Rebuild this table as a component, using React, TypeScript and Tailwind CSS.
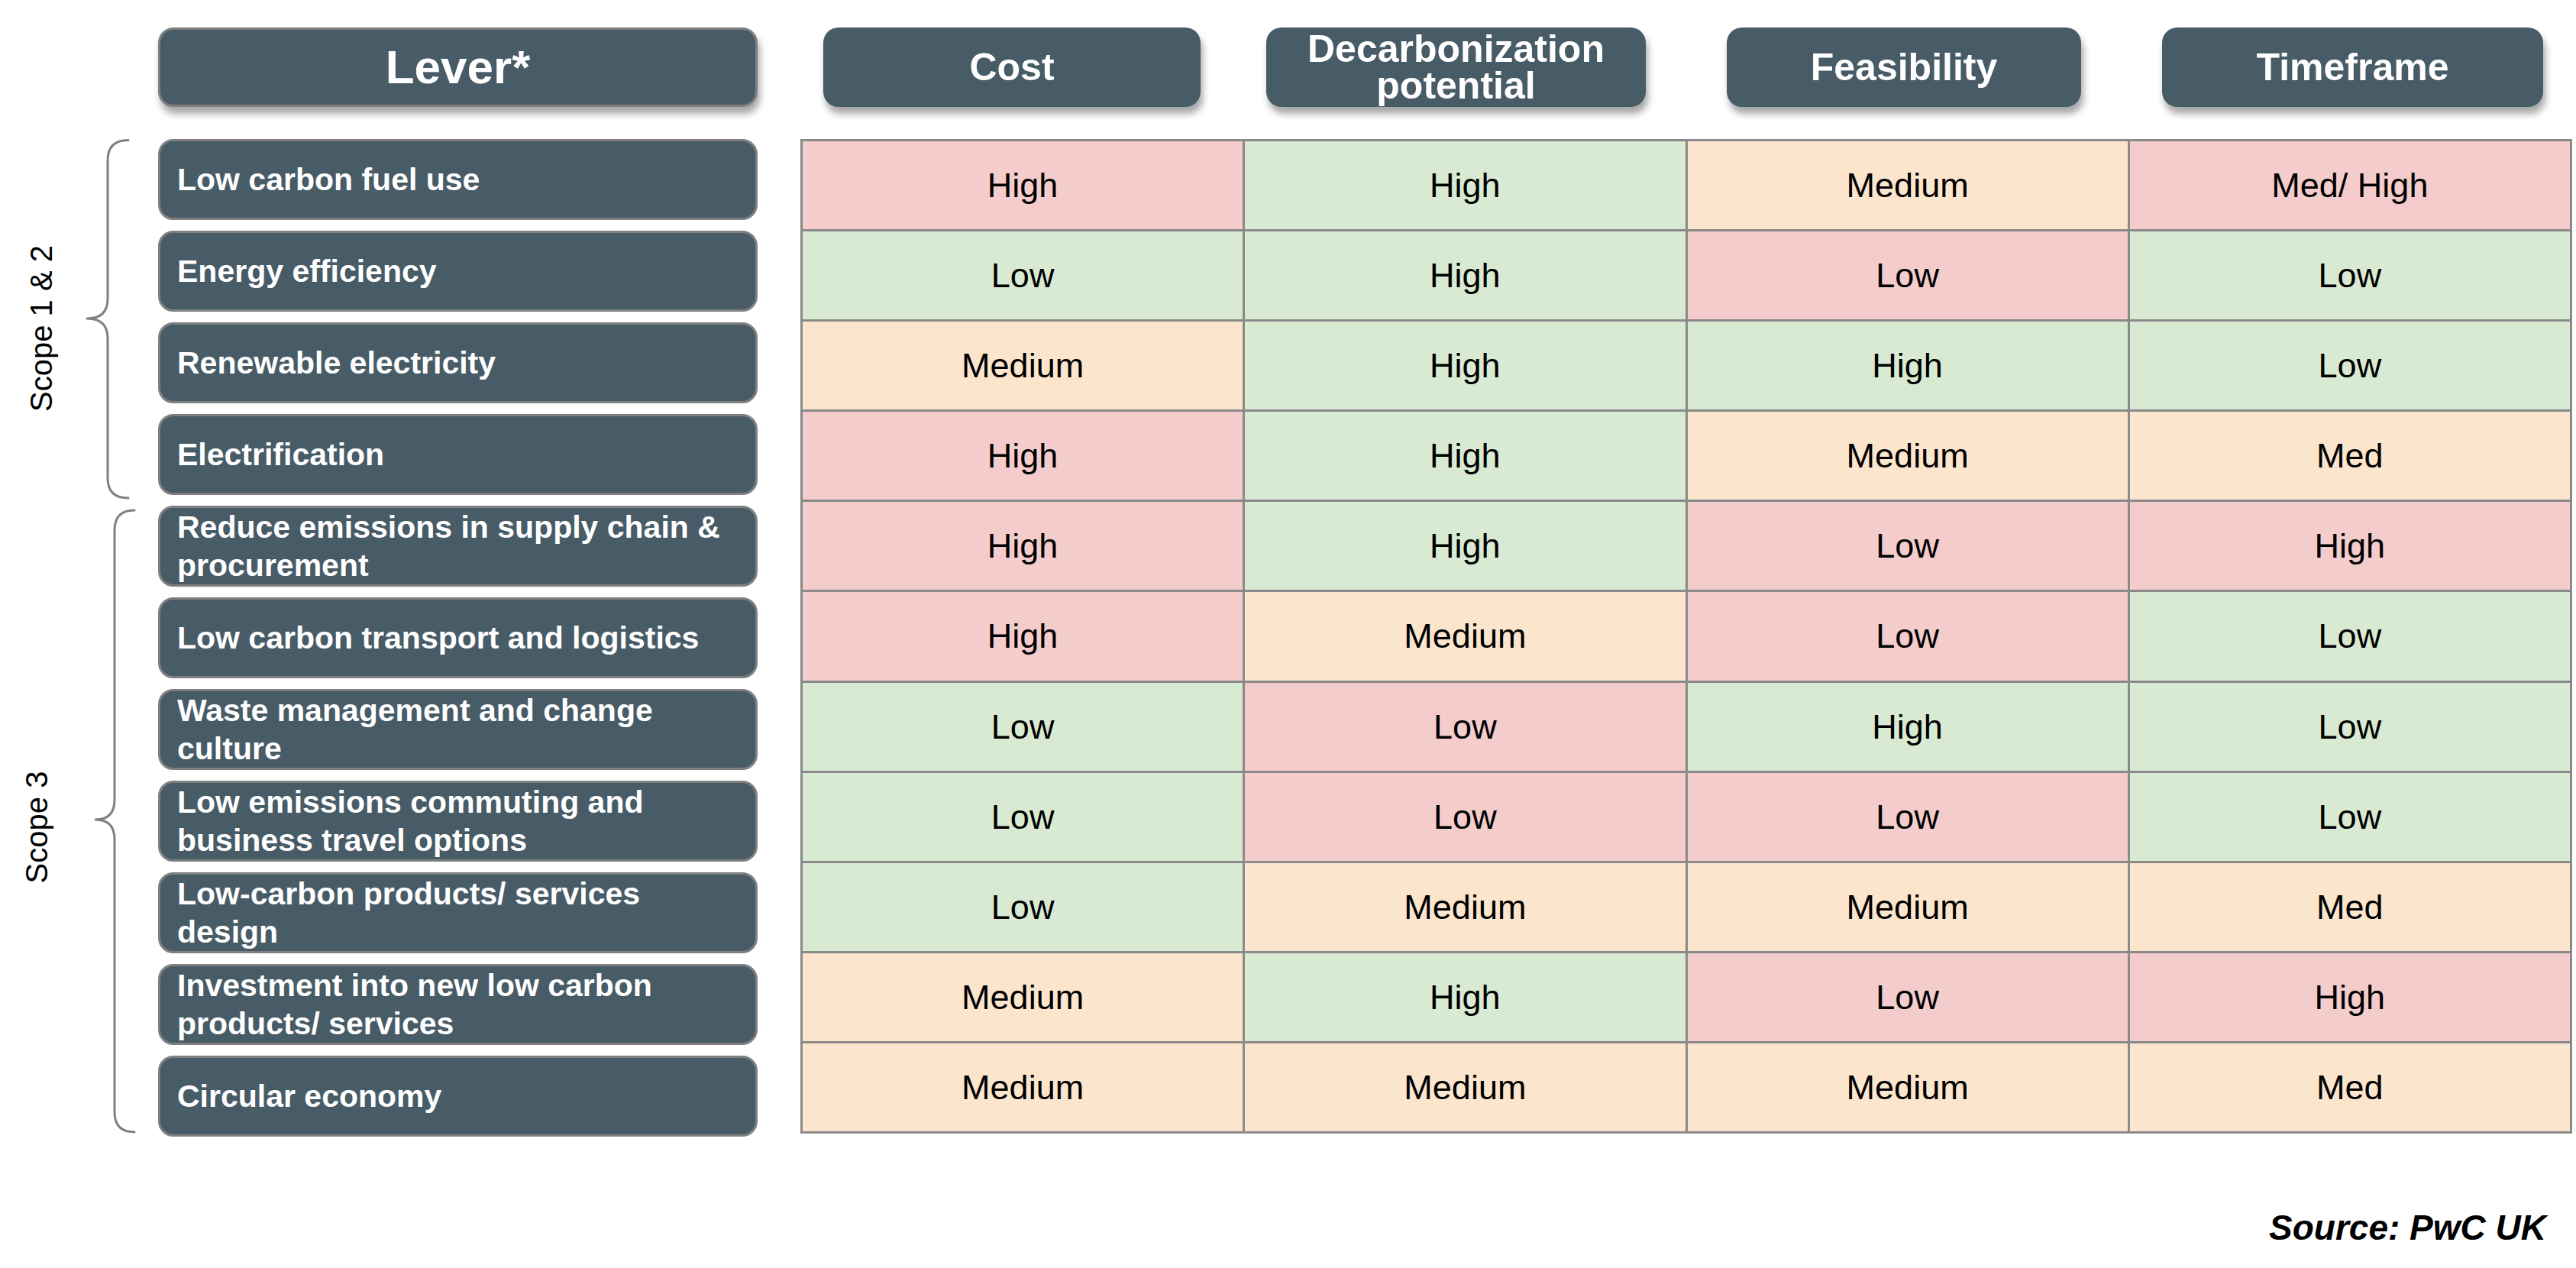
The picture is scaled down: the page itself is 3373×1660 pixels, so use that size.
type Level = 'red' | 'green' | 'amber';

const CELL_BG: Record<Level, string> = {
  red: 'bg-[#f4cccc]',
  green: 'bg-[#d9ead3]',
  amber: 'bg-[#fce5cd]',
};

const HEADERS = [
  { label: 'Cost', className: 'ml-[86px] w-[494px]' },
  { label: 'Decarbonization\npotential', className: 'ml-[86px] w-[497px]' },
  { label: 'Feasibility', className: 'ml-[106px] w-[464px]' },
  { label: 'Timeframe', className: 'ml-[106px] w-[499px]' },
];

const ROWS: { lever: string; cells: [string, Level][] }[] = [
  { lever: 'Low carbon fuel use', cells: [['High', 'red'], ['High', 'green'], ['Medium', 'amber'], ['Med/ High', 'red']] },
  { lever: 'Energy efficiency', cells: [['Low', 'green'], ['High', 'green'], ['Low', 'red'], ['Low', 'green']] },
  { lever: 'Renewable electricity', cells: [['Medium', 'amber'], ['High', 'green'], ['High', 'green'], ['Low', 'green']] },
  { lever: 'Electrification', cells: [['High', 'red'], ['High', 'green'], ['Medium', 'amber'], ['Med', 'amber']] },
  { lever: 'Reduce emissions in supply chain &\nprocurement', cells: [['High', 'red'], ['High', 'green'], ['Low', 'red'], ['High', 'red']] },
  { lever: 'Low carbon transport and logistics', cells: [['High', 'red'], ['Medium', 'amber'], ['Low', 'red'], ['Low', 'green']] },
  { lever: 'Waste management and change\nculture', cells: [['Low', 'green'], ['Low', 'red'], ['High', 'green'], ['Low', 'green']] },
  { lever: 'Low emissions commuting and\nbusiness travel options', cells: [['Low', 'green'], ['Low', 'red'], ['Low', 'red'], ['Low', 'green']] },
  { lever: 'Low-carbon products/ services\ndesign', cells: [['Low', 'green'], ['Medium', 'amber'], ['Medium', 'amber'], ['Med', 'amber']] },
  { lever: 'Investment into new low carbon\nproducts/ services', cells: [['Medium', 'amber'], ['High', 'green'], ['Low', 'red'], ['High', 'red']] },
  { lever: 'Circular economy', cells: [['Medium', 'amber'], ['Medium', 'amber'], ['Medium', 'amber'], ['Med', 'amber']] },
];

const ScopeBlock = ({
  label,
  heightClass,
  textWidth,
  svgWidth,
  path,
  svgHeight,
}: {
  label: string;
  heightClass: string;
  textWidth: string;
  svgWidth: number;
  svgHeight: number;
  path: string;
}) => (
  <div className={`flex ${heightClass}`}>
    <div className={`${textWidth} flex items-center justify-center`}>
      <span className="-rotate-90 whitespace-nowrap text-[40px] leading-none text-black translate-y-[8px]">{label}</span>
    </div>
    <svg width={svgWidth} height={svgHeight} viewBox={`0 0 ${svgWidth} ${svgHeight}`} fill="none">
      <path d={path} stroke="#808080" strokeWidth="3" strokeLinecap="round" strokeLinejoin="round" />
    </svg>
  </div>
);

export default function App() {
  return (
    <div className="w-[3373px] h-[1660px] bg-white pt-[36px] font-['Liberation_Sans',Arial,sans-serif] overflow-hidden">
      {/* column headers */}
      <div className="flex h-[104px]">
        <div className="ml-[207px] w-[785px] rounded-[20px] border-[3px] border-[#7f7f7f] bg-[#485c67] shadow-[3px_9px_10px_rgba(0,0,0,0.35)] flex items-center justify-center">
          <span className="text-white font-bold text-[62px] leading-none">Lever*</span>
        </div>
        {HEADERS.map((h) => (
          <div
            key={h.label}
            className={`${h.className} rounded-[20px] bg-[#485c67] shadow-[3px_9px_10px_rgba(0,0,0,0.35)] flex items-center justify-center`}
          >
            <span className="text-white font-bold text-[50px] leading-[48px] text-center whitespace-pre-line">{h.label}</span>
          </div>
        ))}
      </div>

      {/* body */}
      <div className="flex mt-[42px]">
        <div className="w-[207px] flex flex-col">
          <ScopeBlock
            label="Scope 1 & 2"
            heightClass="h-[480px]"
            textWidth="w-[108px]"
            svgWidth={99}
            svgHeight={480}
            path="M60 1.5 Q33 1.5 33 28 L33 209 Q33 235 6 235 Q33 235 33 261 L33 444 Q33 470 60 470"
          />
          <ScopeBlock
            label="Scope 3"
            heightClass="h-[826px]"
            textWidth="w-[96px]"
            svgWidth={111}
            svgHeight={826}
            path="M80 6 Q54 6 54 32 L54 385 Q54 411 29 411 Q54 411 54 437 L54 794 Q54 820 80 820"
          />
        </div>

        <div className="w-[785px] flex flex-col gap-[14px]">
          {ROWS.map((r) => (
            <div
              key={r.lever}
              className="h-[106px] rounded-[20px] border-[3px] border-[#7f7f7f] bg-[#485c67] flex items-center pl-[22px] pr-[10px]"
            >
              <span className="text-white font-bold text-[41px] leading-[50px] whitespace-pre-line">{r.lever}</span>
            </div>
          ))}
        </div>

        <div className="ml-[56px] w-[2320px] h-[1302px] grid grid-cols-4 grid-rows-[repeat(11,minmax(0,1fr))] gap-[3px] p-[3px] bg-[#8a8a8a]">
          {ROWS.map((r, i) =>
            r.cells.map(([text, level], j) => (
              <div key={`${i}-${j}`} className={`${CELL_BG[level]} flex items-center justify-center`}>
                <span className="text-black text-[45px] leading-none">{text}</span>
              </div>
            ))
          )}
        </div>
      </div>

      <div className="mt-[96px] pr-[39px] text-right">
        <span className="text-black font-bold italic text-[46px] leading-none">Source: PwC UK</span>
      </div>
    </div>
  );
}
